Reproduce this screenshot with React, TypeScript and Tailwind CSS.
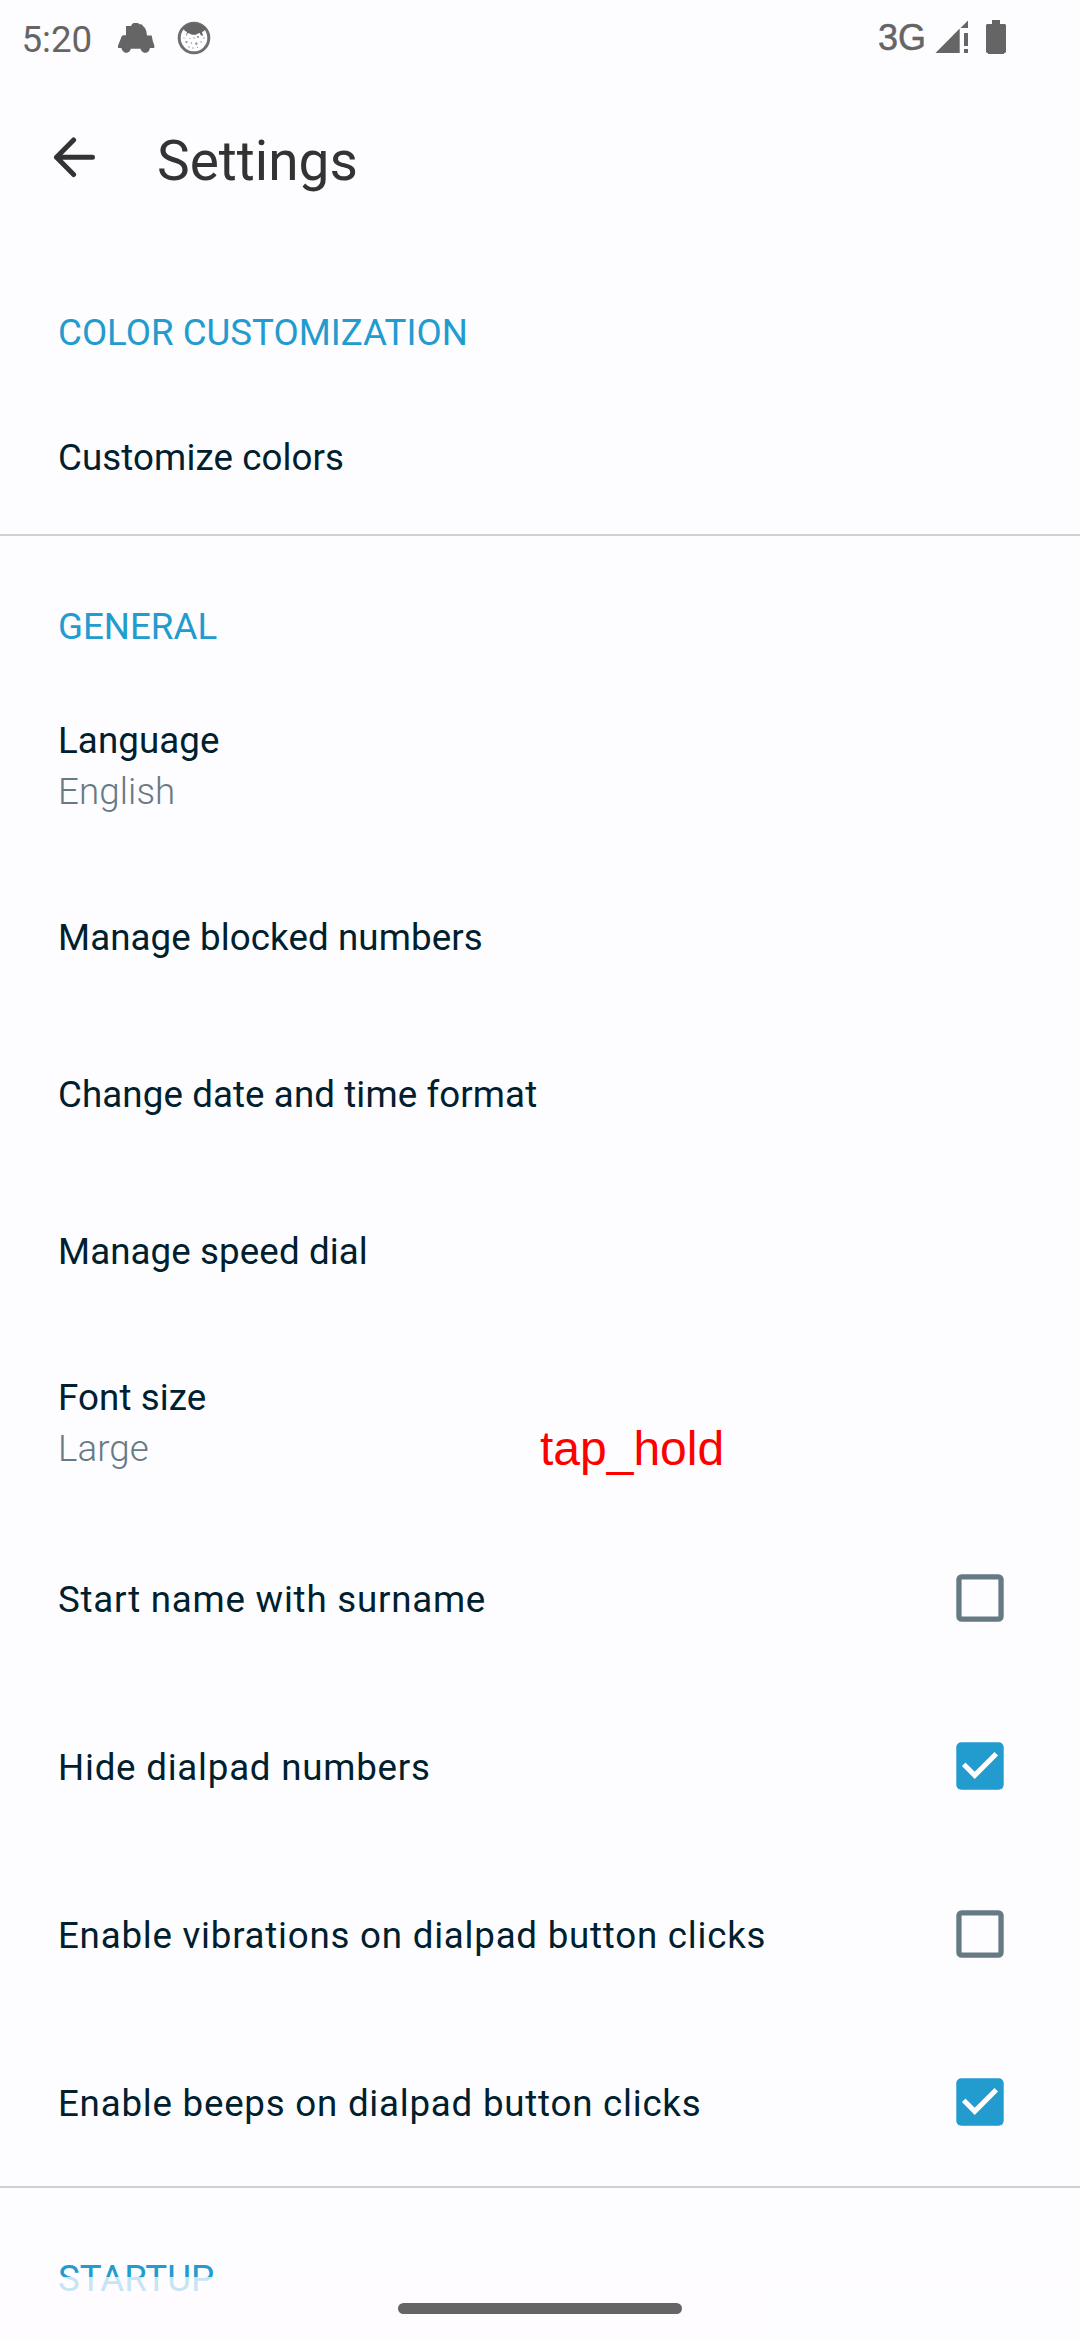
import React from "react";

function CarIcon() {
  return (
    <svg width="38" height="32" viewBox="0 0 38 32" fill="#656565">
      <path d="M14 2.300L15.500 1H20L21.300 2.300H23.500L25 4L27 6L28.300 9L29 13.500H33.700L34.700 18.700L36.300 23.500V26H32L31 29L28.500 30.700H26L23.500 29L22.500 26.700H13L11.300 29.700L9 30.700H7L4.500 28.700L3.300 26H0V23.500L2.300 18L3.500 14.500L5 13.300H8V4H13Z" />
    </svg>
  );
}

function CatIcon() {
  return (
    <svg width="34" height="34" viewBox="0 0 34 34">
      <circle cx="17" cy="17" r="14.8" fill="#fdfcff" stroke="#6e6e6e" strokeWidth="3" />
      <path
        d="M6 7Q10 2.500 17 2.300Q24 2.500 29 7L27 10L25 11l1 4-2.200-.8-1-2.200q-2 .3-3 1.200q-3 1.200-6 0q-1-.9-3-1.200l-1 2.200L9 15l1-4-2-1z"
        fill="#656565"
      />
      <g fill="#8a8a8a">
        <circle cx="9.500" cy="21" r="1.100" />
        <circle cx="19.300" cy="22.600" r="1.200" />
        <circle cx="14.500" cy="22" r=".7" />
        <circle cx="24" cy="21" r=".7" />
        <circle cx="21" cy="16" r="1" />
        <circle cx="17" cy="17" r=".7" />
        <circle cx="13" cy="17.500" r=".6" />
        <circle cx="27" cy="17" r=".7" />
        <circle cx="7" cy="17" r=".6" />
        <circle cx="12" cy="26" r=".7" />
        <circle cx="16" cy="27" r=".7" />
        <circle cx="20.500" cy="26.500" r=".6" />
      </g>
    </svg>
  );
}

function StatusBar() {
  return (
    <div className="flex h-[80px] items-start justify-between text-[#656565]">
      <div className="flex items-start">
        <span className="ml-[21.5px] mt-[17px] w-[96.5px] text-[36.7px] leading-[45px]">5:20</span>
        <span className="mt-[22px]">
          <CarIcon />
        </span>
        <span className="ml-[21px] mt-[21px]">
          <CatIcon />
        </span>
      </div>
      <div className="flex items-start">
        <span className="mt-[17px] w-[57px] font-['Liberation_Sans',sans-serif] text-[36px] leading-[42px] [-webkit-text-stroke:0.5px_#656565]">
          3G
        </span>
        <svg className="mt-[20px]" width="34" height="34" viewBox="0 0 34 34" fill="#656565">
          <path d="M0.500 33L24.700 8.500V33zM25.500 8L33 .5V8zM29 13h4v13h-4zM29 29h4v4h-4z" />
        </svg>
        <svg className="ml-[17px] mr-[74px] mt-[20px]" width="20" height="34" viewBox="0 0 20 34" fill="#656565">
          <path d="M6 0h8v4h5l1 1v27l-1 1h-1v1H2v-1H1l-1-1V5l1-1h5z" />
        </svg>
      </div>
    </div>
  );
}

function Toolbar() {
  return (
    <header className="flex h-[162px] items-start text-[#333333]">
      <svg className="ml-[53px] mt-[56px]" width="42" height="42" viewBox="0 0 42 42" fill="none" stroke="#333333" strokeWidth="5" strokeLinecap="round" strokeLinejoin="round">
        <path d="M20.600 4L3.500 21.300L20.600 38.500M3.500 21.300H39.500" />
      </svg>
      <h1 className="ml-[62px] mt-[49px] text-[55px] leading-[64px]">Settings</h1>
    </header>
  );
}

function SectionTitle({ children }: { children: string }) {
  return <h2 className="h-[137px] pl-[58px] pt-[68px] text-[36.7px] leading-[45px] text-[#229bce]">{children}</h2>;
}

function Row({ label, value, size }: { label: string; value?: string; size: string }) {
  return (
    <div className={`flex flex-col justify-center gap-[6px] pl-[58px] pt-[2px] text-[36.7px] leading-[45px] tracking-[0.1px] ${size}`}>
      <span className="text-[#00202e]">{label}</span>
      {value && <span className="font-light text-[#667a84]">{value}</span>}
    </div>
  );
}

function CheckRow({ label, checked }: { label: string; checked?: boolean }) {
  return (
    <div className="flex h-[168px] items-center justify-between pl-[58px] pr-[76px] text-[36.7px] leading-[45px] tracking-[0.77px] text-[#00202e]">
      <span className="pt-[2px]">{label}</span>
      <svg width="48" height="48" viewBox="0 0 48 48" fill="none">
        {checked ? (
          <>
            <rect x="0.300" y="0.300" width="47.400" height="47.400" rx="5" fill="#229bce" />
            <path d="M7.700 22.300L18.700 33.300L40.300 11.700" stroke="#fdfcff" strokeWidth="5.100" />
          </>
        ) : (
          <rect x="2.950" y="2.950" width="42.100" height="42.100" rx="2.600" stroke="#667a84" strokeWidth="5.300" />
        )}
      </svg>
    </div>
  );
}

function Divider() {
  return <div className="h-[2px] bg-[#d0d0d3]" />;
}

export default function App() {
  return (
    <div className="relative h-[2340px] w-[1080px] overflow-hidden bg-[#fdfcff] font-[Roboto,sans-serif] font-normal">
      <StatusBar />
      <Toolbar />
      <SectionTitle>COLOR CUSTOMIZATION</SectionTitle>
      <Row label="Customize colors" size="h-[155px]" />
      <Divider />
      <SectionTitle>GENERAL</SectionTitle>
      <Row label="Language" value="English" size="h-[184px]" />
      <Row label="Manage blocked numbers" size="h-[158px]" />
      <Row label="Change date and time format" size="h-[157px]" />
      <Row label="Manage speed dial" size="h-[157px]" />
      <Row label="Font size" value="Large" size="h-[185px]" />
      <CheckRow label="Start name with surname" />
      <CheckRow label="Hide dialpad numbers" checked />
      <CheckRow label="Enable vibrations on dialpad button clicks" />
      <CheckRow label="Enable beeps on dialpad button clicks" checked />
      <Divider />
      <SectionTitle>STARTUP</SectionTitle>

      <span className="absolute left-[540px] top-[1421px] font-['Liberation_Sans',sans-serif] text-[48px] leading-[56px] text-[#ff0000]">
        tap_hold
      </span>
      <div className="absolute bottom-0 left-0 flex h-[63px] w-full justify-center bg-[#fdfcff]/75 pt-[26px]">
        <div className="h-[11px] w-[284px] rounded-full bg-[#656565]" />
      </div>
    </div>
  );
}
